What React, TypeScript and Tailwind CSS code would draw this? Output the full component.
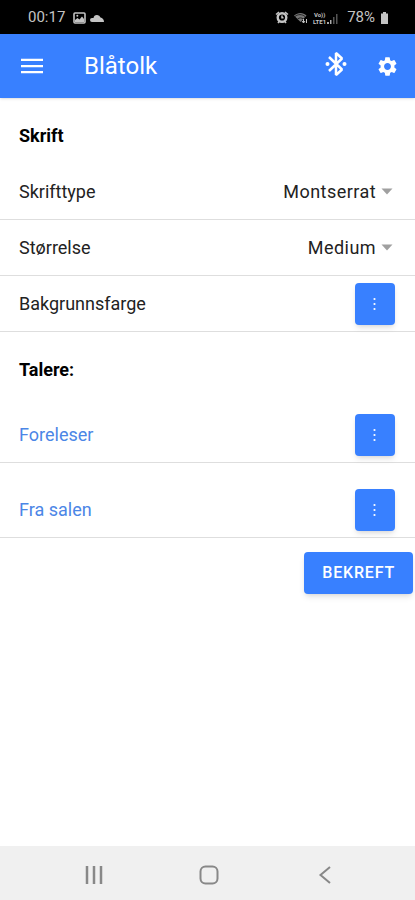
import type { ReactNode } from "react";
import { MdSettings } from "react-icons/md";

function StatusBar() {
  return (
    <div className="flex h-[34px] items-center justify-between bg-black pt-0.5 pr-[26px] pl-7 text-[#c4c4c4]">
      <div className="flex items-center gap-2">
        <span className="text-[15px]">00:17</span>
        <svg width="13" height="12" viewBox="0 0 13 12" aria-hidden="true">
          <rect x="1" y="1" width="11" height="10" rx="1" fill="none" stroke="currentColor" strokeWidth="1.6" />
          <path d="M2 10V8l2.500-2 2 1.500L9 4.500 11 7v3z" fill="currentColor" />
          <circle cx="4.300" cy="3.800" r="1" fill="currentColor" />
        </svg>
        <svg className="-ml-1" width="14" height="9" viewBox="0 0 14 9" aria-hidden="true">
          <path d="M2 9a2 2 0 0 1 0-4h1.500a3.600 3.600 0 0 1 7-.5C12.500 5 14 6.500 14 9z" fill="currentColor" />
        </svg>
      </div>
      <div className="flex items-center gap-[5px]">
        <svg width="14" height="13" viewBox="0 0 14 13" aria-hidden="true">
          <circle cx="7" cy="6.500" r="4.300" fill="none" stroke="currentColor" strokeWidth="2.400" />
          <path d="M1 3.500 4 1M13 3.500 10 1M3 12l1.500-2M11 12 9.500 10M7 4.500v2.300h1.500" fill="none" stroke="currentColor" strokeWidth="1.500" />
        </svg>
        <svg width="14" height="12" viewBox="0 0 14 12" aria-hidden="true">
          <path d="M0 3.500C4 0 9 0 12.500 3.500L6.500 10z" fill="#777" />
          <path d="M1 4.500c3-2.500 7-2.500 10 0M3.500 7c2-1.500 4-1.500 6 0" fill="none" stroke="#222" />
          <path d="M9.500 11V7M8 9l1.500 2L11 9M12.500 7v4" fill="none" stroke="currentColor" />
        </svg>
        <div className="flex items-end">
          <div className="flex flex-col items-center text-[6px] leading-[7px] font-bold">
            <span>Vo))</span>
            <span>LTE1</span>
          </div>
          <svg width="12" height="12" viewBox="0 0 12 12" aria-hidden="true">
            <path d="M1 11V9h2v2zM4 11V7h1.500v4z" fill="#aaa" />
            <path d="M7 11V4h1.500v7zM10 11V1h1.500v10z" fill="#555" />
          </svg>
        </div>
        <span className="ml-1 text-[15px]">78%</span>
        <svg width="9" height="12" viewBox="0 0 9 12" aria-hidden="true">
          <path d="M3 0h3v1.500h2V12H1V1.500h2z" fill="currentColor" />
        </svg>
      </div>
    </div>
  );
}

function Header() {
  return (
    <header className="flex h-16 items-center bg-[#3880ff] pr-4 pl-5 text-white shadow">
      <button type="button" aria-label="Meny" className="flex size-6 items-center justify-center">
        <svg width="22" height="16" viewBox="0 0 22 16" fill="currentColor" aria-hidden="true">
          <path d="M0 .7h22v2.300H0zM0 6.900h22v2.300H0zM0 13h22v2.300H0z" />
        </svg>
      </button>
      <h1 className="ml-10 flex-1 text-2xl">Blåtolk</h1>
      <button type="button" aria-label="Bluetooth" className="mr-7 pb-1">
        <svg width="24" height="26" viewBox="0 0 24 26" aria-hidden="true">
          <path d="M5 6l13 12.500-6 5.500V2l6 5.500L5 20" fill="none" stroke="currentColor" strokeWidth="2.500" strokeLinejoin="bevel" />
          <circle cx="3.500" cy="13" r="2" fill="currentColor" />
          <circle cx="20.500" cy="13" r="2" fill="currentColor" />
        </svg>
      </button>
      <button type="button" aria-label="Innstillinger">
        <MdSettings size={23} />
      </button>
    </header>
  );
}

function SelectRow({ id, label, value }: { id: string; label: string; value: string }) {
  return (
    <div className="flex h-14 items-center justify-between border-b border-[#dedede] pr-[21px] pl-[19px]">
      <label htmlFor={id}>{label}</label>
      <div className="flex items-center gap-1">
        <select id={id} defaultValue={value} className="appearance-none bg-transparent text-right tracking-wide outline-none">
          <option>{value}</option>
        </select>
        <svg className="pointer-events-none" width="14" height="7" viewBox="0 0 14 7" aria-hidden="true">
          <path d="M1.500 0.500h11L7 6.500z" fill="#a0a0a0" />
        </svg>
      </div>
    </div>
  );
}

function ActionRow({ label, children }: { label: string; children: ReactNode }) {
  return (
    <div className="flex h-14 items-center justify-between border-b border-[#dedede] pr-5 pl-[19px]">
      {children}
      <button
        type="button"
        aria-label={`Velg farge for ${label}`}
        className="flex h-[42px] w-10 items-center justify-center rounded bg-[#3880ff] text-white shadow-md"
      >
        <svg width="4" height="14" viewBox="0 0 4 14" fill="currentColor" aria-hidden="true">
          <circle cx="1.500" cy="2" r="1.100" />
          <circle cx="1.500" cy="7" r="1.100" />
          <circle cx="1.500" cy="12" r="1.100" />
        </svg>
      </button>
    </div>
  );
}

function NavigationBar() {
  return (
    <nav className="flex h-[54px] items-center justify-around bg-[#f0f0f0] pt-1 pr-8 pl-9 text-[#888]">
      <button type="button" aria-label="Nylige apper">
        <svg width="20" height="20" viewBox="0 0 20 20" fill="none" stroke="currentColor" strokeWidth="2.500" aria-hidden="true">
          <path d="M3 1v18M10 1v18M17 1v18" />
        </svg>
      </button>
      <button type="button" aria-label="Hjem">
        <svg width="20" height="20" viewBox="0 0 20 20" fill="none" stroke="currentColor" strokeWidth="2" aria-hidden="true">
          <rect x="1.500" y="1.500" width="17" height="17" rx="5" />
        </svg>
      </button>
      <button type="button" aria-label="Tilbake">
        <svg width="20" height="20" viewBox="0 0 20 20" fill="none" stroke="currentColor" strokeWidth="2" aria-hidden="true">
          <path d="M15 2 5.500 10l9.500 8" />
        </svg>
      </button>
    </nav>
  );
}

export default function App() {
  return (
    <div className="flex min-h-screen flex-col bg-white font-[Roboto,sans-serif] text-lg text-[#222]">
      <StatusBar />
      <Header />
      <main className="flex-1">
        <h2 className="px-[19px] pt-7 pb-[18px] leading-5 font-bold text-black">Skrift</h2>
        <SelectRow id="font" label="Skrifttype" value="Montserrat" />
        <SelectRow id="size" label="Størrelse" value="Medium" />
        <ActionRow label="Bakgrunnsfarge">
          <span>Bakgrunnsfarge</span>
        </ActionRow>
        <h2 className="px-[19px] pt-7 pb-[27px] leading-5 font-bold text-black">Talere:</h2>
        <div className="flex flex-col gap-[19px]">
          <ActionRow label="Foreleser">
            <a href="#foreleser" className="text-[#4b86e6]">Foreleser</a>
          </ActionRow>
          <ActionRow label="Fra salen">
            <a href="#fra-salen" className="text-[#4b86e6]">Fra salen</a>
          </ActionRow>
        </div>
        <div className="flex justify-end px-0.5 pt-3.5">
          <button
            type="button"
            className="h-[42px] rounded bg-[#3880ff] px-[18px] text-base font-medium tracking-wider text-white shadow-md"
          >
            BEKREFT
          </button>
        </div>
      </main>
      <NavigationBar />
    </div>
  );
}
